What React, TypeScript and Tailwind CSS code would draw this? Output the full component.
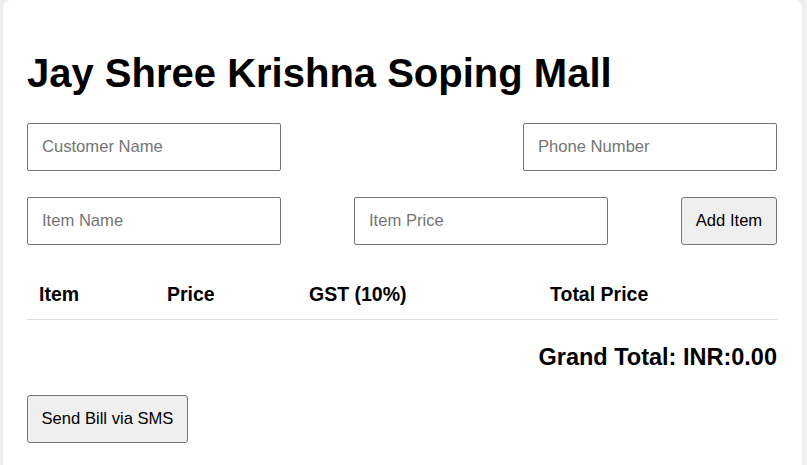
import React from "react";

export default function App() {
  const font = { fontFamily: '"Liberation Sans", Arial, sans-serif' };
  const inputCls =
    "w-[254px] h-[48px] border border-[#767676] rounded-[2px] pl-[14px] pr-[13px] pt-[14px] pb-[14px] text-[16.6px] leading-[18px] placeholder:text-[#757575] outline-none";
  return (
    <div className="min-h-[465px] bg-[#efefef] px-[3px]" style={font}>
      <div className="bg-white rounded-[8px] min-h-[480px] pl-[24px] pr-[25px] pt-[50px] pb-[30px] w-[799px]">
        <h1 className="text-[40px] leading-[46px] font-bold text-black m-0">
          Jay Shree Krishna Soping Mall
        </h1>

        <div className="mt-[27px] flex justify-between">
          <input placeholder="Customer Name" className={inputCls} />
          <input placeholder="Phone Number" className={inputCls} />
        </div>

        <div className="mt-[26px] flex justify-between">
          <input placeholder="Item Name" className={inputCls} />
          <input placeholder="Item Price" className={inputCls} />
          <button className="w-[96px] h-[48px] border border-[#767676] rounded-[3px] bg-[#efefef] text-[16.6px] leading-[18px] text-black flex items-center justify-center">
            Add Item
          </button>
        </div>

        <div className="mt-[28px] grid grid-cols-[128px_142px_241px_239px] border-b border-[#dddddd] text-[19.5px] leading-[22px] font-bold text-black">
          <div className="px-[12px] pt-[10px] pb-[14px]">Item</div>
          <div className="px-[12px] pt-[10px] pb-[14px]">Price</div>
          <div className="px-[12px] pt-[10px] pb-[14px]">GST (10%)</div>
          <div className="px-[12px] pt-[10px] pb-[14px]">Total Price</div>
        </div>

        <div className="mt-[24px] text-right text-[23.5px] leading-[26px] font-bold text-black">
          Grand Total: INR:0.00
        </div>

        <button className="mt-[25px] w-[161px] h-[48px] border border-[#767676] rounded-[3px] bg-[#efefef] text-[16.6px] leading-[18px] text-black flex items-center justify-center">
          Send Bill via SMS
        </button>
      </div>
    </div>
  );
}
